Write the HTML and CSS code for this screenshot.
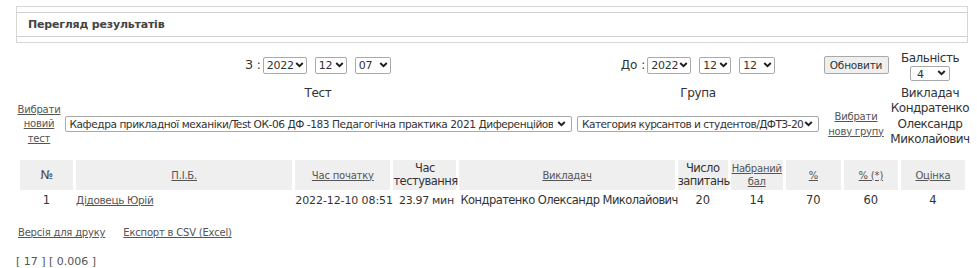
FILE: index.html
```html
<!DOCTYPE html>
<html lang="uk">
<head>
<meta charset="utf-8">
<title>Перегляд результатів</title>
<link rel="stylesheet" href="styles.css">
</head>
<body>
<div class="page">
  <div class="panel">
    <div class="panel-title">Перегляд результатів</div>
  </div>

  <div class="filters">
    <div class="cell"></div>
    <div class="cell row-inline">
      <span class="lbl">З :</span>
      <span class="sel w-year"><select><option>2022</option></select><svg class="chev" viewBox="0 0 10 7"><path d="M1.2 1.2 L5 5 L8.8 1.2"/></svg></span>
      <span class="sel w-mon"><select><option>12</option></select><svg class="chev" viewBox="0 0 10 7"><path d="M1.2 1.2 L5 5 L8.8 1.2"/></svg></span>
      <span class="sel w-day"><select><option>07</option></select><svg class="chev" viewBox="0 0 10 7"><path d="M1.2 1.2 L5 5 L8.8 1.2"/></svg></span>
    </div>
    <div class="cell row-inline">
      <span class="lbl">До :</span>
      <span class="sel w-year"><select><option>2022</option></select><svg class="chev" viewBox="0 0 10 7"><path d="M1.2 1.2 L5 5 L8.8 1.2"/></svg></span>
      <span class="sel w-mon"><select><option>12</option></select><svg class="chev" viewBox="0 0 10 7"><path d="M1.2 1.2 L5 5 L8.8 1.2"/></svg></span>
      <span class="sel w-day"><select><option>12</option></select><svg class="chev" viewBox="0 0 10 7"><path d="M1.2 1.2 L5 5 L8.8 1.2"/></svg></span>
    </div>
    <div class="cell"><button class="btn" type="button">Обновити</button></div>
    <div class="cell stack">
      <span>Бальність</span>
      <span class="sel w-bal"><select><option>4</option></select><svg class="chev" viewBox="0 0 10 7"><path d="M1.2 1.2 L5 5 L8.8 1.2"/></svg></span>
    </div>

    <div class="cell"></div>
    <div class="cell head">Тест</div>
    <div class="cell head">Група</div>
    <div class="cell"></div>
    <div class="cell head">Викладач</div>

    <div class="cell"><a href="#" class="small-link">Вибрати<br>новий<br>тест</a></div>
    <div class="cell"><span class="sel w-test"><select><option>Кафедра прикладної механіки/Test ОК-06 ДФ -183 Педагогічна практика 2021 Диференційований залік</option></select><svg class="chev" viewBox="0 0 10 7"><path d="M1.2 1.2 L5 5 L8.8 1.2"/></svg></span></div>
    <div class="cell"><span class="sel w-group"><select><option>Категория курсантов и студентов/ДФТЗ-20</option></select><svg class="chev" viewBox="0 0 10 7"><path d="M1.2 1.2 L5 5 L8.8 1.2"/></svg></span></div>
    <div class="cell"><a href="#" class="small-link">Вибрати<br>нову групу</a></div>
    <div class="cell teacher">Кондратенко<br>Олександр<br>Миколайович</div>
  </div>

  <table class="results">
    <colgroup>
      <col class="c-num"><col class="c-name"><col class="c-start"><col class="c-dur"><col class="c-teach">
      <col class="c-q"><col class="c-score"><col class="c-pct"><col class="c-pct2"><col class="c-grade">
    </colgroup>
    <thead>
      <tr>
        <th class="num">№</th>
        <th><a href="#">П.І.Б.</a></th>
        <th><a href="#">Час початку</a></th>
        <th class="plain">Час<br>тестування</th>
        <th><a href="#">Викладач</a></th>
        <th class="plain">Число<br>запитань</th>
        <th><a href="#">Набраний<br>бал</a></th>
        <th><a href="#">%</a></th>
        <th><a href="#">% (*)</a></th>
        <th><a href="#">Оцінка</a></th>
      </tr>
    </thead>
    <tbody>
      <tr>
        <td class="ctr">1</td>
        <td class="left"><a href="#">Дідовець Юрій</a></td>
        <td class="left digits">2022-12-10 08:51</td>
        <td class="ctr dur">23.97 мин</td>
        <td class="left teach">Кондратенко Олександр Миколайович</td>
        <td class="ctr">20</td>
        <td class="ctr">14</td>
        <td class="ctr">70</td>
        <td class="ctr">60</td>
        <td class="ctr">4</td>
      </tr>
    </tbody>
  </table>

  <div class="bottom-links">
    <a href="#">Версія для друку</a>
    <a href="#">Експорт в CSV (Excel)</a>
  </div>
  <div class="stats">[ 17 ] [ 0.006 ]</div>
</div>
</body>
</html>
```

FILE: styles.css
```css
* { box-sizing: border-box; }
html, body { margin: 0; padding: 0; background: #fff; }
body {
  font-family: "DejaVu Sans", Verdana, sans-serif;
  font-size: 11px;
  letter-spacing: -0.35px;
  color: #333;
}
a { color: #555; }

.page { padding: 6px 9px 0 16px; width: 977px; }

.panel {
  width: 952px;
  border: 1px solid #d6d6d6;
  padding: 5px 0 5px;
}
.panel-title {
  border-top: 1px solid #cfcfcf;
  border-bottom: 1px solid #cfcfcf;
  height: 25px;
  line-height: 23px;
  padding-left: 11px;
  font-weight: bold;
  font-size: 11px;
  letter-spacing: -0.2px;
  color: #444;
}

.filters {
  display: grid;
  grid-template-columns: 46px 512px 248px 68px 80px;
  grid-template-rows: 36px 18px 44px;
  margin-top: 4px;
  align-items: center;
  justify-items: center;
}
.cell { text-align: center; line-height: 15px; }
.row-inline { display: flex; align-items: center; gap: 8px; padding-top: 0; }
.row-inline .lbl { margin-right: -6px; font-size: 12px; letter-spacing: 0; }
.stack { display: flex; flex-direction: column; align-items: center; gap: 1px; font-size: 12px; line-height: 14px; padding-top: 1px; letter-spacing: -0.45px; }
.head { font-size: 12px; padding-top: 2px; }
.teacher { font-size: 12px; line-height: 15.5px; letter-spacing: -0.5px; margin-top: 3px; }

.small-link { display: inline-block; font-size: 10px; line-height: 14.5px; color: #555; letter-spacing: -0.2px; margin-top: 3px; }

.sel { position: relative; display: inline-block; height: 17px; }
.sel select {
  -webkit-appearance: none;
  appearance: none;
  width: 100%;
  height: 100%;
  margin: 0;
  border: 1px solid #a9a9a9;
  border-radius: 2px;
  background: #fff;
  font-family: "DejaVu Sans", Verdana, sans-serif;
  font-size: 11px;
  letter-spacing: -0.3px;
  color: #333;
  padding: 0 12px 0 3px;
  line-height: 15px;
  overflow: hidden;
  white-space: nowrap;
}
.sel .chev {
  position: absolute;
  right: 3px;
  top: 5px;
  width: 9px;
  height: 6px;
  pointer-events: none;
}
.chev path { fill: none; stroke: #1e1e1e; stroke-width: 2.2; stroke-linecap: butt; stroke-linejoin: miter; }

.w-year { width: 44px; }
.w-mon { width: 32px; }
.w-day { width: 36px; }
.w-bal { width: 40px; height: 15px; }
.w-bal select { padding-left: 6px; }
.w-bal .chev { top: 4px; right: 4px; }
.w-test { width: 507px; height: 16px; margin-top: 2px; }
.w-group { width: 242px; height: 16px; margin-top: 2px; }
.w-test select, .w-group select { font-size: 10.6px; letter-spacing: -0.45px; padding-left: 4px; padding-right: 18px; }
.w-group select { letter-spacing: -0.55px; padding-right: 14px; }
.w-test .chev, .w-group .chev { top: 5px; right: 6px; }

.btn {
  width: 65px;
  height: 18px;
  padding: 0;
  border: 1px solid #a9a9a9;
  border-radius: 2px;
  background: #efefef;
  font-family: "DejaVu Sans", Verdana, sans-serif;
  font-size: 10.5px;
  letter-spacing: -0.2px;
  color: #333;
}

.results {
  margin-top: 15px;
  margin-left: 1px;
  border-collapse: separate;
  border-spacing: 3px 0;
  table-layout: fixed;
  width: 951px;
}
.c-num { width: 53px; }
.c-name { width: 216px; }
.c-start { width: 95px; }
.c-dur { width: 63px; }
.c-teach { width: 215px; }
.c-q { width: 50px; }
.c-score { width: 52px; }
.c-pct { width: 55px; }
.c-pct2 { width: 54px; }
.c-grade { width: 64px; }

.results th {
  background: #efefef;
  height: 30px;
  padding: 0;
  font-weight: normal;
  font-size: 10px;
  letter-spacing: -0.2px;
  line-height: 13px;
  text-align: center;
  vertical-align: middle;
}
.results th.num { font-size: 12px; font-weight: normal; color: #444; }
.results th.plain { font-size: 11.5px; color: #333; line-height: 13px; letter-spacing: -0.5px; }
.results th a { color: #555; }
.results td {
  height: 20px;
  padding: 0;
  font-size: 11.5px;
  white-space: nowrap;
  vertical-align: middle;
}
.results td.ctr { text-align: center; letter-spacing: 0; }
.results td.dur { font-size: 11px; letter-spacing: -0.3px; padding-left: 3px; }
.results td.digits { letter-spacing: -0.1px; font-size: 11px; }
.results td.teach { letter-spacing: -0.55px; padding-left: 1px; }
.results td.left { text-align: left; }
.results td.left a { font-size: 10.5px; }

.bottom-links { margin-top: 17px; font-size: 10px; line-height: 12px; display: flex; gap: 18px; padding-left: 2px; letter-spacing: -0.2px; }
.stats { margin-top: 16px; font-size: 11px; line-height: 13px; color: #555; letter-spacing: 0; }
```
